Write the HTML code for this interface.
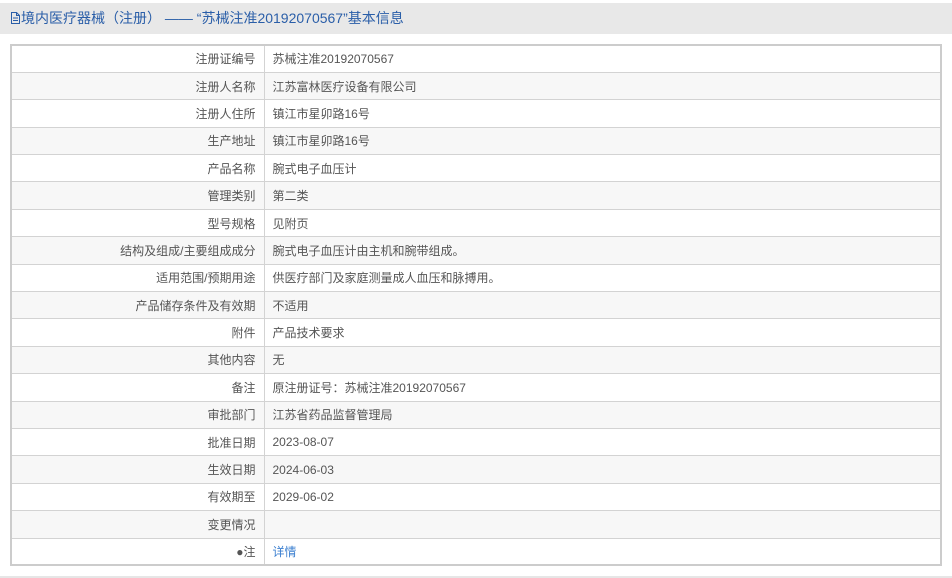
<!DOCTYPE html>
<html><head><meta charset="utf-8"><style>
body{margin:0;background:#fff;font-family:"Liberation Sans","Noto Sans CJK SC",sans-serif;font-size:12px;color:#555;width:952px;height:578px;overflow:hidden;position:relative}
.hd{position:absolute;left:0;top:3px;width:952px;height:31px;background:#e8e8e8;color:#2a5ea8;font-size:14px;line-height:31px;padding-left:10px;box-sizing:border-box}
table{position:absolute;left:10px;top:44px;width:932px;border-collapse:collapse;border:2px solid #ccc}
td{border:1px solid #d3d3d3;height:27.4px;padding:0 8px;box-sizing:border-box}
td.l{width:253px;text-align:right}
tr:nth-child(even) td{background:#f7f7f7}
a{color:#3b7fd0;text-decoration:none}
.bl{position:absolute;left:0;top:576px;width:952px;height:2px;background:#e6e6e6}
</style></head><body>
<div class="hd"><svg width="11" height="12" viewBox="0 0 11 12" style="vertical-align:-1px"><path d="M1.5 .5h5l3 3v8h-8z M6.5 .5v3h3 M3 6h5 M3 8.5h5" fill="none" stroke="#2a5ea8"/></svg>境内医疗器械（注册） —— “苏械注准20192070567”基本信息</div>
<table>
<tr><td class="l">注册证编号</td><td>苏械注准20192070567</td></tr>
<tr><td class="l">注册人名称</td><td>江苏富林医疗设备有限公司</td></tr>
<tr><td class="l">注册人住所</td><td>镇江市星卯路16号</td></tr>
<tr><td class="l">生产地址</td><td>镇江市星卯路16号</td></tr>
<tr><td class="l">产品名称</td><td>腕式电子血压计</td></tr>
<tr><td class="l">管理类别</td><td>第二类</td></tr>
<tr><td class="l">型号规格</td><td>见附页</td></tr>
<tr><td class="l">结构及组成/主要组成成分</td><td>腕式电子血压计由主机和腕带组成。</td></tr>
<tr><td class="l">适用范围/预期用途</td><td>供医疗部门及家庭测量成人血压和脉搏用。</td></tr>
<tr><td class="l">产品储存条件及有效期</td><td>不适用</td></tr>
<tr><td class="l">附件</td><td>产品技术要求</td></tr>
<tr><td class="l">其他内容</td><td>无</td></tr>
<tr><td class="l">备注</td><td>原注册证号：苏械注准20192070567</td></tr>
<tr><td class="l">审批部门</td><td>江苏省药品监督管理局</td></tr>
<tr><td class="l">批准日期</td><td>2023-08-07</td></tr>
<tr><td class="l">生效日期</td><td>2024-06-03</td></tr>
<tr><td class="l">有效期至</td><td>2029-06-02</td></tr>
<tr><td class="l">变更情况</td><td></td></tr>
<tr><td class="l"><span style="color:#555">●</span>注</td><td><a>详情</a></td></tr>
</table>
<div class="bl"></div>
</body></html>
